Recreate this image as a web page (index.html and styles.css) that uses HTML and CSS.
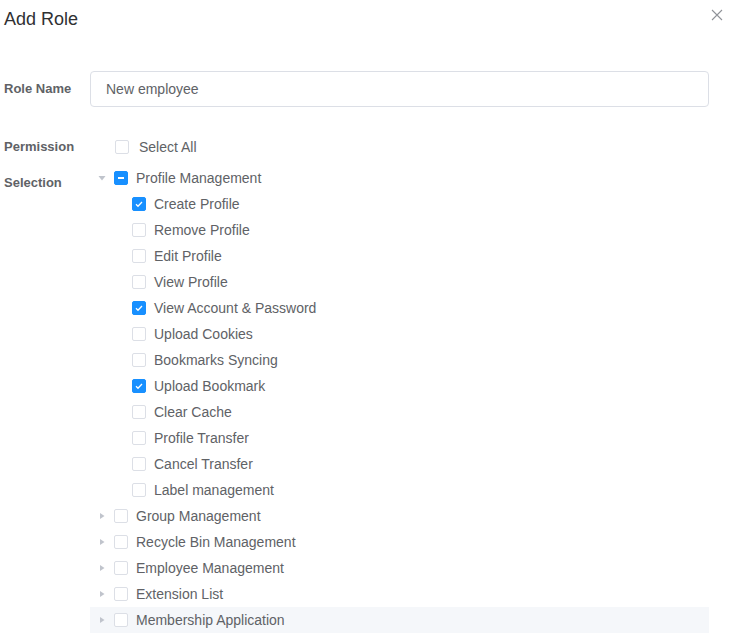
FILE: index.html
```html
<!DOCTYPE html>
<html lang="en">
<head>
<meta charset="utf-8">
<title>Add Role</title>
<link rel="stylesheet" href="styles.css">
</head>
<body>
<div class="dialog">
  <header class="dlg-header">
    <span class="dlg-title">Add Role</span>
    <button class="dlg-close" type="button" aria-label="Close">
      <svg width="12" height="12" viewBox="0 0 12 12"><path d="M1 1L11 11M11 1L1 11" stroke="#909399" stroke-width="1.1" fill="none"/></svg>
    </button>
  </header>
  <form class="form">
    <div class="form-item">
      <label class="form-label">Role Name</label>
      <div class="form-content">
        <input class="input" type="text" value="New employee">
      </div>
    </div>
    <div class="form-item">
      <label class="form-label">Permission Selection</label>
      <div class="form-content">
        <div class="select-all">
          <span class="cb"></span>
          <span class="cb-label">Select All</span>
        </div>
        <div class="tree">
          <div class="node">
            <span class="caret"><svg width="12" height="12" viewBox="0 0 12 12"><path d="M2.5 4H9.5L6 8.5Z" fill="#c0c4cc"/></svg></span>
            <span class="cb cb-ind"></span>
            <span class="node-label">Profile Management</span>
          </div>
          <div class="node child">
            <span class="caret"></span>
            <span class="cb cb-on"><svg width="14" height="14" viewBox="0 0 14 14"><path d="M4 7.2L6 9.2L10 5" stroke="#fff" stroke-width="1.3" fill="none"/></svg></span>
            <span class="node-label">Create Profile</span>
          </div>
          <div class="node child"><span class="caret"></span><span class="cb"></span><span class="node-label">Remove Profile</span></div>
          <div class="node child"><span class="caret"></span><span class="cb"></span><span class="node-label">Edit Profile</span></div>
          <div class="node child"><span class="caret"></span><span class="cb"></span><span class="node-label">View Profile</span></div>
          <div class="node child">
            <span class="caret"></span>
            <span class="cb cb-on"><svg width="14" height="14" viewBox="0 0 14 14"><path d="M4 7.2L6 9.2L10 5" stroke="#fff" stroke-width="1.3" fill="none"/></svg></span>
            <span class="node-label">View Account &amp; Password</span>
          </div>
          <div class="node child"><span class="caret"></span><span class="cb"></span><span class="node-label">Upload Cookies</span></div>
          <div class="node child"><span class="caret"></span><span class="cb"></span><span class="node-label">Bookmarks Syncing</span></div>
          <div class="node child">
            <span class="caret"></span>
            <span class="cb cb-on"><svg width="14" height="14" viewBox="0 0 14 14"><path d="M4 7.2L6 9.2L10 5" stroke="#fff" stroke-width="1.3" fill="none"/></svg></span>
            <span class="node-label">Upload Bookmark</span>
          </div>
          <div class="node child"><span class="caret"></span><span class="cb"></span><span class="node-label">Clear Cache</span></div>
          <div class="node child"><span class="caret"></span><span class="cb"></span><span class="node-label">Profile Transfer</span></div>
          <div class="node child"><span class="caret"></span><span class="cb"></span><span class="node-label">Cancel Transfer</span></div>
          <div class="node child"><span class="caret"></span><span class="cb"></span><span class="node-label">Label management</span></div>
          <div class="node">
            <span class="caret"><svg width="12" height="12" viewBox="0 0 12 12"><path d="M4 3V9L8.5 6Z" fill="#c0c4cc"/></svg></span>
            <span class="cb"></span><span class="node-label">Group Management</span>
          </div>
          <div class="node">
            <span class="caret"><svg width="12" height="12" viewBox="0 0 12 12"><path d="M4 3V9L8.5 6Z" fill="#c0c4cc"/></svg></span>
            <span class="cb"></span><span class="node-label">Recycle Bin Management</span>
          </div>
          <div class="node">
            <span class="caret"><svg width="12" height="12" viewBox="0 0 12 12"><path d="M4 3V9L8.5 6Z" fill="#c0c4cc"/></svg></span>
            <span class="cb"></span><span class="node-label">Employee Management</span>
          </div>
          <div class="node">
            <span class="caret"><svg width="12" height="12" viewBox="0 0 12 12"><path d="M4 3V9L8.5 6Z" fill="#c0c4cc"/></svg></span>
            <span class="cb"></span><span class="node-label">Extension List</span>
          </div>
          <div class="node node-hover">
            <span class="caret"><svg width="12" height="12" viewBox="0 0 12 12"><path d="M4 3V9L8.5 6Z" fill="#c0c4cc"/></svg></span>
            <span class="cb"></span><span class="node-label">Membership Application</span>
          </div>
        </div>
      </div>
    </div>
  </form>
</div>
</body>
</html>
```
FILE: styles.css
```css
html, body {
  margin: 0;
  padding: 0;
  background: #fff;
}
body {
  font-family: "Liberation Sans", Arial, sans-serif;
  color: #606266;
  font-size: 14px;
}
.dialog {
  width: 729px;
  height: 638px;
  overflow: hidden;
}
.dlg-header {
  display: flex;
  justify-content: space-between;
  align-items: flex-start;
  padding: 7px 6px 0 4px;
}
.dlg-title {
  font-size: 18px;
  line-height: 24px;
  color: #303133;
}
.dlg-close {
  border: 0;
  background: none;
  padding: 0;
  margin-top: 2px;
  width: 12px;
  height: 12px;
  display: block;
  cursor: pointer;
}
.dlg-close svg { display: block; }
.form {
  padding: 40px 20px 0 4px;
}
.form-item {
  display: flex;
  margin-bottom: 22px;
}
.form-label {
  width: 86px;
  flex-shrink: 0;
  font-size: 13px;
  font-weight: 700;
  line-height: 36px;
  color: #606266;
}
.form-content {
  flex: 1;
  min-width: 0;
}
.input {
  box-sizing: border-box;
  width: 100%;
  height: 36px;
  border: 1px solid #dcdfe6;
  border-radius: 4px;
  padding: 0 15px;
  font-family: inherit;
  font-size: 14px;
  color: #606266;
  outline: none;
  display: block;
}
.select-all {
  display: flex;
  align-items: center;
  height: 36px;
  padding-left: 25px;
}
.cb {
  box-sizing: border-box;
  width: 14px;
  height: 14px;
  border: 1px solid #dcdfe6;
  border-radius: 2px;
  background: #fff;
  flex-shrink: 0;
  position: relative;
  display: block;
}
.cb svg {
  position: absolute;
  left: -1px;
  top: -1px;
  display: block;
}
.cb-on {
  background: #1890ff;
  border-color: #1890ff;
}
.cb-ind {
  background: #1890ff;
  border-color: #1890ff;
}
.cb-ind::before {
  content: "";
  position: absolute;
  left: 3px;
  top: 5px;
  width: 6px;
  height: 2px;
  background: #fff;
}
.cb-label {
  margin-left: 10px;
}
.tree {
  display: flex;
  flex-direction: column;
}
.node {
  display: flex;
  align-items: center;
  height: 26px;
}
.node.child {
  padding-left: 18px;
}
.node-hover {
  background: #f5f7fa;
}
.caret {
  width: 12px;
  height: 12px;
  padding: 6px;
  flex-shrink: 0;
}
.caret svg { display: block; }
.node .cb {
  margin-right: 8px;
}
.node-label {
  white-space: nowrap;
}
```
